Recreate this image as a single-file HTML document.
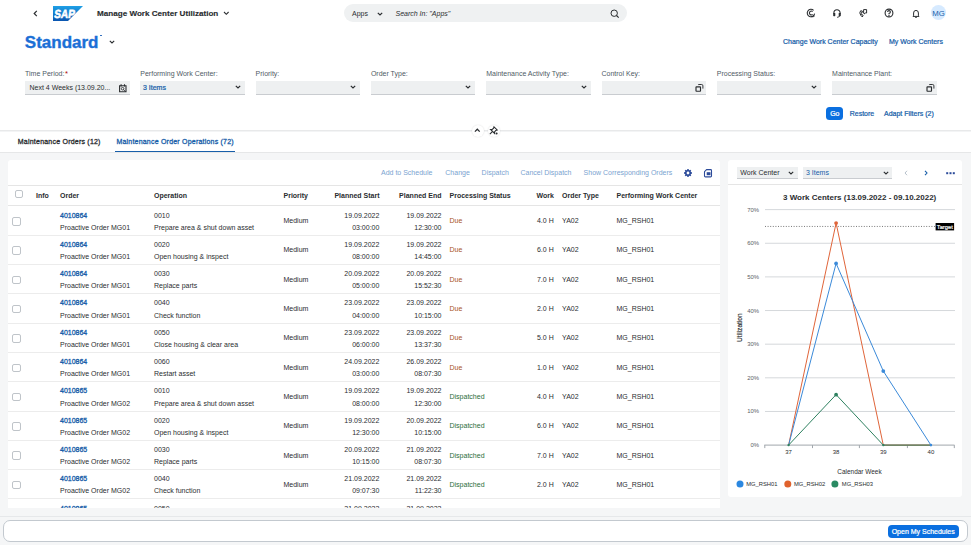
<!DOCTYPE html>
<html><head><meta charset="utf-8">
<style>
*{box-sizing:border-box;margin:0;padding:0}
html,body{width:971px;height:545px;overflow:hidden;background:#fff}
body{font-family:"Liberation Sans",sans-serif;font-size:7px;color:#2a2d30;position:relative}
.a{position:absolute;white-space:nowrap}
.b{font-weight:bold}
.sb{-webkit-text-stroke:0.22px currentColor}
.lk{color:#175ea9}
.lbl{color:#4f5b66;font-size:7px}
.dis{color:#7aa3d0}
.due{color:#a8541f}
.dsp{color:#2b6d3c}
.cb{width:8.5px;height:8.5px;border:1px solid #bfc4c9;border-radius:2px;background:#fff}
.fld{height:13.5px;background:#eef0f1;border-bottom:1px solid #c9ccd0}
svg{position:absolute;overflow:visible}
</style></head><body>

<svg style="left:33px;top:10px" width="5" height="7" viewBox="0 0 5 7"><path d="M3.8 0.8 L1.2 3.5 L3.8 6.2" fill="none" stroke="#2a2d30" stroke-width="1.2"/></svg>
<svg style="left:53px;top:5.7px" width="30" height="15" viewBox="0 0 30 15">
<defs><linearGradient id="sg" x1="0" y1="0" x2="0" y2="1"><stop offset="0" stop-color="#1ea0e6"/><stop offset="1" stop-color="#0a55b0"/></linearGradient></defs>
<path d="M0 0 H30 L15 15 H0 Z" fill="url(#sg)"/>
<text x="1" y="11.8" textLength="20.6" lengthAdjust="spacingAndGlyphs" transform="skewX(-8) translate(1.4 0)" font-family="Liberation Sans" font-weight="bold" font-size="11.8" fill="#fff" stroke="#fff" stroke-width=".55">SAP</text>
</svg>
<div class="a b" style="left:97px;top:9px;font-size:8.1px;color:#2a2d30;-webkit-text-stroke:.15px #2a2d30">Manage Work Center Utilization</div>
<svg style="left:222.5px;top:10.8px" width="7" height="5" viewBox="0 0 7 5"><path d="M1 1 L3.3 3.3 L5.6 1" fill="none" stroke="#2a2d30" stroke-width="1.1"/></svg>
<div class="a" style="left:344px;top:4px;width:283px;height:17.6px;border-radius:9px;background:#eff1f2"></div>
<div class="a" style="left:352px;top:9.5px;color:#2a2d30">Apps</div>
<svg style="left:376.5px;top:11.5px" width="6" height="4" viewBox="0 0 6 4"><path d="M0.8 0.8 L3 3 L5.2 0.8" fill="none" stroke="#2a2d30" stroke-width="1.2"/></svg>
<div class="a" style="left:395.5px;top:9.5px;font-style:italic;color:#2a2d30">Search In: "Apps"</div>
<svg style="left:609.5px;top:8.5px" width="10" height="10" viewBox="0 0 10 10"><circle cx="4.2" cy="4.2" r="3.2" fill="none" stroke="#2a2d30" stroke-width="1"/><path d="M6.5 6.5 L8.7 8.7" stroke="#2a2d30" stroke-width="1.1"/></svg>
<svg style="left:805.5px;top:8px" width="10" height="10" viewBox="0 0 10 10"><path d="M8.6 5.6 A3.7 3.7 0 1 1 7.6 2.4" fill="none" stroke="#2a2d30" stroke-width="1.1"/><path d="M6.6 3.6 A1.9 1.9 0 1 0 6.6 6.4" fill="none" stroke="#2a2d30" stroke-width="1.1"/><path d="M5.5 8.7 Q7.5 9 8.6 8" fill="none" stroke="#2a2d30" stroke-width="1"/></svg>
<svg style="left:832px;top:8px" width="10" height="10" viewBox="0 0 10 10"><path d="M1.9 6 V4.8 A3.1 3.1 0 0 1 8.1 4.8 V6" fill="none" stroke="#2a2d30" stroke-width="1.1"/><rect x="1.2" y="5" width="2.1" height="3.2" rx=".6" fill="#2a2d30"/><rect x="6.7" y="5" width="2.1" height="3.2" rx=".6" fill="#2a2d30"/><path d="M7.6 8 Q7 9.3 5.2 9.3" fill="none" stroke="#2a2d30" stroke-width="1"/></svg>
<svg style="left:858px;top:8px" width="10" height="10" viewBox="0 0 10 10"><path d="M2.6 2.8 Q0.9 4.8 2.8 7.3 L4 8.8 L5.2 8 L4.3 6.5 L3.6 6.7 Q3 5.4 3.6 4.3 L4.3 4.4 L4.3 3 Z" fill="none" stroke="#2a2d30" stroke-width="1"/><path d="M5.6 1.6 H8.6 V5 H7.4 L6.2 6 V5 H5.6 Z" fill="none" stroke="#2a2d30" stroke-width="1"/></svg>
<svg style="left:883.8px;top:8px" width="10" height="10" viewBox="0 0 10 10"><circle cx="5" cy="5" r="3.9" fill="none" stroke="#2a2d30" stroke-width="1.1"/><path d="M3.6 4 Q3.6 2.6 5 2.6 Q6.4 2.6 6.4 3.9 Q6.4 4.9 5 5.4 V6.2" fill="none" stroke="#2a2d30" stroke-width="1.05"/><circle cx="5" cy="7.5" r=".65" fill="#2a2d30"/></svg>
<svg style="left:910.5px;top:9.2px" width="10" height="10" viewBox="0 0 10 10"><path d="M2 7.4 H8 L7.4 6.3 V4 A2.4 2.6 0 0 0 2.6 4 V6.3 Z" fill="none" stroke="#2a2d30" stroke-width="1"/><path d="M4.3 8.5 H5.7" stroke="#2a2d30" stroke-width="1"/></svg>
<div class="a" style="left:931px;top:5.3px;width:15.2px;height:15.2px;border-radius:50%;background:#d6eaff"></div>
<div class="a" style="left:931px;top:8.5px;width:15.2px;text-align:center;color:#175ea9;font-size:7.8px">MG</div>
<div class="a b" style="left:24.8px;top:32.7px;font-size:17px;color:#1b6fd6;-webkit-text-stroke:.35px #1b6fd6">Standard</div>
<div class="a" style="left:100px;top:34.6px;width:1.8px;height:1.8px;border-radius:50%;background:#1b5fb8"></div>
<svg style="left:108.5px;top:39.8px" width="6" height="4" viewBox="0 0 6 4"><path d="M0.8 0.8 L3 3 L5.2 0.8" fill="none" stroke="#2a2d30" stroke-width="1.1"/></svg>
<div class="a sb lk" style="left:783px;top:38.2px">Change Work Center Capacity</div>
<div class="a sb lk" style="left:889px;top:38.2px">My Work Centers</div>
<div class="a lbl" style="left:25px;top:70px">Time Period:</div>
<div class="a fld" style="left:25px;top:81px;width:104.5px"></div>
<svg style="left:118.5px;top:83.7px" width="8" height="9" viewBox="0 0 8 9"><path d="M0.6 1.7 H7 V7.8 H0.6 Z" fill="none" stroke="#2a2d30" stroke-width="1.1"/><path d="M2.1 0.3 V2.4 M5.5 0.3 V2.4" stroke="#2a2d30" stroke-width="1.1"/><circle cx="3.6" cy="4.7" r="1.3" fill="none" stroke="#2a2d30" stroke-width=".85"/><path d="M4.5 5.6 L6.4 7.6" stroke="#2a2d30" stroke-width=".9"/></svg>
<div class="a lbl" style="left:140.3px;top:70px">Performing Work Center:</div>
<div class="a fld" style="left:140.3px;top:81px;width:104.5px"></div>
<svg style="left:234.8px;top:85.3px" width="6" height="4" viewBox="0 0 6 4"><path d="M0.8 0.8 L3 3 L5.2 0.8" fill="none" stroke="#2a2d30" stroke-width="1.2"/></svg>
<div class="a lbl" style="left:255.6px;top:70px">Priority:</div>
<div class="a fld" style="left:255.6px;top:81px;width:104.5px"></div>
<svg style="left:350.1px;top:85.3px" width="6" height="4" viewBox="0 0 6 4"><path d="M0.8 0.8 L3 3 L5.2 0.8" fill="none" stroke="#2a2d30" stroke-width="1.2"/></svg>
<div class="a lbl" style="left:370.9px;top:70px">Order Type:</div>
<div class="a fld" style="left:370.9px;top:81px;width:104.5px"></div>
<svg style="left:465.4px;top:85.3px" width="6" height="4" viewBox="0 0 6 4"><path d="M0.8 0.8 L3 3 L5.2 0.8" fill="none" stroke="#2a2d30" stroke-width="1.2"/></svg>
<div class="a lbl" style="left:486.2px;top:70px">Maintenance Activity Type:</div>
<div class="a fld" style="left:486.2px;top:81px;width:104.5px"></div>
<svg style="left:580.7px;top:85.3px" width="6" height="4" viewBox="0 0 6 4"><path d="M0.8 0.8 L3 3 L5.2 0.8" fill="none" stroke="#2a2d30" stroke-width="1.2"/></svg>
<div class="a lbl" style="left:601.5px;top:70px">Control Key:</div>
<div class="a fld" style="left:601.5px;top:81px;width:104.5px"></div>
<svg style="left:695.2px;top:82.7px" width="9" height="9" viewBox="0 0 9 9"><rect x="1" y="3.9" width="4.5" height="4.3" rx=".4" fill="none" stroke="#2a2d30" stroke-width="1.15"/><path d="M3 2 Q3.2 1.5 4 1.5 H6.6 Q7.9 1.5 7.9 2.8 V5.6" fill="none" stroke="#2a2d30" stroke-width=".95"/></svg>
<div class="a lbl" style="left:716.8px;top:70px">Processing Status:</div>
<div class="a fld" style="left:716.8px;top:81px;width:104.5px"></div>
<svg style="left:811.3px;top:85.3px" width="6" height="4" viewBox="0 0 6 4"><path d="M0.8 0.8 L3 3 L5.2 0.8" fill="none" stroke="#2a2d30" stroke-width="1.2"/></svg>
<div class="a lbl" style="left:832.1px;top:70px">Maintenance Plant:</div>
<div class="a fld" style="left:832.1px;top:81px;width:104.5px"></div>
<svg style="left:925.8px;top:82.7px" width="9" height="9" viewBox="0 0 9 9"><rect x="1" y="3.9" width="4.5" height="4.3" rx=".4" fill="none" stroke="#2a2d30" stroke-width="1.15"/><path d="M3 2 Q3.2 1.5 4 1.5 H6.6 Q7.9 1.5 7.9 2.8 V5.6" fill="none" stroke="#2a2d30" stroke-width=".95"/></svg>
<div class="a" style="left:65px;top:69.3px;color:#aa0808;font-size:7.5px">*</div>
<div class="a" style="left:29.5px;top:84.3px;color:#2a2d30">Next 4 Weeks (13.09.20...</div>
<div class="a sb lk" style="left:143px;top:84.3px">3 Items</div>
<div class="a sb" style="left:826.3px;top:107px;width:17px;height:12.5px;border-radius:3.5px;background:#0a6fe0;color:#fff;text-align:center;line-height:14px">Go</div>
<div class="a sb lk" style="left:849.7px;top:109.7px">Restore</div>
<div class="a sb lk" style="left:884px;top:109.7px">Adapt Filters (2)</div>
<div class="a" style="left:0;top:129.5px;width:971px;height:1px;background:#e8e9ea"></div>
<div class="a" style="left:0;top:130.5px;width:971px;height:1px;background:#f3f4f5"></div>
<div class="a" style="left:471.5px;top:124.8px;width:12px;height:12px;border-radius:50%;background:#fff;box-shadow:0 0 1.5px rgba(0,0,0,.15)"></div>
<svg style="left:474.3px;top:128.2px" width="7" height="5" viewBox="0 0 7 5"><path d="M0.9 3.6 L3.3 1.2 L5.7 3.6" fill="none" stroke="#2a2d30" stroke-width="1.25"/></svg>
<div class="a" style="left:487.5px;top:124.8px;width:12px;height:12px;border-radius:50%;background:#fff;box-shadow:0 0 1.5px rgba(0,0,0,.15)"></div>
<svg style="left:489px;top:125.5px" width="9" height="9" viewBox="0 0 9 9"><path d="M5 0.8 L8.2 4 L6.8 4.4 L5.6 5.8 L5.6 7.4 L1.6 3.4 L3.2 3.4 L4.6 2.2 Z" fill="none" stroke="#2a2d30" stroke-width="1.05"/><path d="M3.4 5.6 L0.8 8.2" stroke="#2a2d30" stroke-width="1.05"/><circle cx="7.6" cy="7.6" r="1" fill="#2a2d30"/></svg>
<div class="a" style="left:17.8px;top:137.6px;color:#2a2d30;letter-spacing:.22px;-webkit-text-stroke:.3px #2a2d30">Maintenance Orders (12)</div>
<div class="a lk" style="left:116.4px;top:137.6px;letter-spacing:.21px;-webkit-text-stroke:.3px currentColor">Maintenance Order Operations (72)</div>
<div class="a" style="left:115px;top:151px;width:120px;height:1.5px;background:#175ea9"></div>
<div class="a" style="left:0;top:153px;width:971px;height:392px;background:#f5f6f7"></div>
<div class="a" style="left:0;top:152.3px;width:971px;height:1.2px;background:#e6e7e8"></div>
<div class="a" style="left:8px;top:160px;width:711.7px;height:348px;background:#fff;border-radius:3px 3px 0 0;overflow:hidden">
<div class="a dis" style="left:373px;top:8.8px;">Add to Schedule</div>
<div class="a dis" style="left:437.3px;top:8.8px;">Change</div>
<div class="a dis" style="left:473.6px;top:8.8px;">Dispatch</div>
<div class="a dis" style="left:512.5px;top:8.8px;">Cancel Dispatch</div>
<div class="a dis" style="left:575.6px;top:8.8px;">Show Corresponding Orders</div>
<svg style="left:676px;top:8.9px" width="8" height="8" viewBox="0 0 8 8"><path d="M7.94 3.32 L7.94 4.68 L6.87 4.89 L6.65 5.40 L7.27 6.31 L6.31 7.27 L5.40 6.65 L4.89 6.87 L4.68 7.94 L3.32 7.94 L3.11 6.87 L2.60 6.65 L1.69 7.27 L0.73 6.31 L1.35 5.40 L1.13 4.89 L0.06 4.68 L0.06 3.32 L1.13 3.11 L1.35 2.60 L0.73 1.69 L1.69 0.73 L2.60 1.35 L3.11 1.13 L3.32 0.06 L4.68 0.06 L4.89 1.13 L5.40 1.35 L6.31 0.73 L7.27 1.69 L6.65 2.60 L6.87 3.11 Z M4 2.6 A1.4 1.4 0 1 0 4 5.4 A1.4 1.4 0 1 0 4 2.6 Z" fill="#2c4b9a" fill-rule="evenodd"/></svg>
<svg style="left:696.3px;top:8.5px" width="8" height="8.5" viewBox="0 0 8 8.5"><path d="M2.6 0.6 H6.6 Q7.5 0.6 7.5 1.5 V7 Q7.5 7.9 6.6 7.9 H1.4 Q0.5 7.9 0.5 7 V2.7 Z" fill="none" stroke="#2c4b9a" stroke-width="1.1"/><rect x="2.7" y="3.2" width="3.8" height="3" fill="#2c4b9a"/></svg>
<div class="a" style="left:0;top:24.5px;width:711.7px;height:1px;background:#e5e5e5"></div>
<div class="a cb" style="left:7.4px;top:30.2px;width:7.8px;height:7.8px"></div>
<div class="a b" style="left:28px;top:31.6px;">Info</div>
<div class="a b" style="left:52px;top:31.6px;">Order</div>
<div class="a b" style="left:146px;top:31.6px;">Operation</div>
<div class="a b" style="left:275.5px;top:31.6px;">Priority</div>
<div class="a b" style="left:441.5px;top:31.6px;">Processing Status</div>
<div class="a b" style="left:554px;top:31.6px;">Order Type</div>
<div class="a b" style="left:608.5px;top:31.6px;">Performing Work Center</div>
<div class="a b" style="right:340.2px;top:31.6px;">Planned Start</div>
<div class="a b" style="right:278.2px;top:31.6px;">Planned End</div>
<div class="a b" style="right:165.8px;top:31.6px;">Work</div>
<div class="a" style="left:0;top:45px;width:711.7px;height:1px;background:#e5e5e5"></div>
<div class="a cb" style="left:4px;top:57.0px"></div>
<div class="a sb lk" style="left:52px;top:51.5px;-webkit-text-stroke:.3px currentColor">4010864</div>
<div class="a " style="left:52px;top:63.7px;">Proactive Order MG01</div>
<div class="a " style="left:146px;top:51.5px;">0010</div>
<div class="a " style="left:146px;top:63.7px;">Prepare area &amp; shut down asset</div>
<div class="a " style="left:275.5px;top:57.1px;">Medium</div>
<div class="a " style="right:340.3px;top:51.5px;">19.09.2022</div>
<div class="a " style="right:340.3px;top:63.7px;">03:00:00</div>
<div class="a " style="right:278.2px;top:51.5px;">19.09.2022</div>
<div class="a " style="right:278.2px;top:63.7px;">12:30:00</div>
<div class="a due" style="left:441.5px;top:57.1px;">Due</div>
<div class="a " style="right:166.0px;top:57.1px;">4.0 H</div>
<div class="a " style="left:554px;top:57.1px;">YA02</div>
<div class="a " style="left:608.5px;top:57.1px;">MG_RSH01</div>
<div class="a" style="left:0;top:74.7px;width:711.7px;height:1px;background:#ececec"></div>
<div class="a cb" style="left:4px;top:86.3px"></div>
<div class="a sb lk" style="left:52px;top:80.8px;-webkit-text-stroke:.3px currentColor">4010864</div>
<div class="a " style="left:52px;top:93.0px;">Proactive Order MG01</div>
<div class="a " style="left:146px;top:80.8px;">0020</div>
<div class="a " style="left:146px;top:93.0px;">Open housing &amp; inspect</div>
<div class="a " style="left:275.5px;top:86.4px;">Medium</div>
<div class="a " style="right:340.3px;top:80.8px;">19.09.2022</div>
<div class="a " style="right:340.3px;top:93.0px;">08:00:00</div>
<div class="a " style="right:278.2px;top:80.8px;">19.09.2022</div>
<div class="a " style="right:278.2px;top:93.0px;">14:45:00</div>
<div class="a due" style="left:441.5px;top:86.4px;">Due</div>
<div class="a " style="right:166.0px;top:86.4px;">6.0 H</div>
<div class="a " style="left:554px;top:86.4px;">YA02</div>
<div class="a " style="left:608.5px;top:86.4px;">MG_RSH01</div>
<div class="a" style="left:0;top:104.0px;width:711.7px;height:1px;background:#ececec"></div>
<div class="a cb" style="left:4px;top:115.6px"></div>
<div class="a sb lk" style="left:52px;top:110.1px;-webkit-text-stroke:.3px currentColor">4010864</div>
<div class="a " style="left:52px;top:122.3px;">Proactive Order MG01</div>
<div class="a " style="left:146px;top:110.1px;">0030</div>
<div class="a " style="left:146px;top:122.3px;">Replace parts</div>
<div class="a " style="left:275.5px;top:115.7px;">Medium</div>
<div class="a " style="right:340.3px;top:110.1px;">20.09.2022</div>
<div class="a " style="right:340.3px;top:122.3px;">05:00:00</div>
<div class="a " style="right:278.2px;top:110.1px;">20.09.2022</div>
<div class="a " style="right:278.2px;top:122.3px;">15:52:30</div>
<div class="a due" style="left:441.5px;top:115.7px;">Due</div>
<div class="a " style="right:166.0px;top:115.7px;">7.0 H</div>
<div class="a " style="left:554px;top:115.7px;">YA02</div>
<div class="a " style="left:608.5px;top:115.7px;">MG_RSH01</div>
<div class="a" style="left:0;top:133.3px;width:711.7px;height:1px;background:#ececec"></div>
<div class="a cb" style="left:4px;top:144.9px"></div>
<div class="a sb lk" style="left:52px;top:139.4px;-webkit-text-stroke:.3px currentColor">4010864</div>
<div class="a " style="left:52px;top:151.6px;">Proactive Order MG01</div>
<div class="a " style="left:146px;top:139.4px;">0040</div>
<div class="a " style="left:146px;top:151.6px;">Check function</div>
<div class="a " style="left:275.5px;top:145.0px;">Medium</div>
<div class="a " style="right:340.3px;top:139.4px;">23.09.2022</div>
<div class="a " style="right:340.3px;top:151.6px;">04:00:00</div>
<div class="a " style="right:278.2px;top:139.4px;">23.09.2022</div>
<div class="a " style="right:278.2px;top:151.6px;">10:15:00</div>
<div class="a due" style="left:441.5px;top:145.0px;">Due</div>
<div class="a " style="right:166.0px;top:145.0px;">2.0 H</div>
<div class="a " style="left:554px;top:145.0px;">YA02</div>
<div class="a " style="left:608.5px;top:145.0px;">MG_RSH01</div>
<div class="a" style="left:0;top:162.6px;width:711.7px;height:1px;background:#ececec"></div>
<div class="a cb" style="left:4px;top:174.2px"></div>
<div class="a sb lk" style="left:52px;top:168.7px;-webkit-text-stroke:.3px currentColor">4010864</div>
<div class="a " style="left:52px;top:180.9px;">Proactive Order MG01</div>
<div class="a " style="left:146px;top:168.7px;">0050</div>
<div class="a " style="left:146px;top:180.9px;">Close housing &amp; clear area</div>
<div class="a " style="left:275.5px;top:174.3px;">Medium</div>
<div class="a " style="right:340.3px;top:168.7px;">23.09.2022</div>
<div class="a " style="right:340.3px;top:180.9px;">06:00:00</div>
<div class="a " style="right:278.2px;top:168.7px;">23.09.2022</div>
<div class="a " style="right:278.2px;top:180.9px;">13:37:30</div>
<div class="a due" style="left:441.5px;top:174.3px;">Due</div>
<div class="a " style="right:166.0px;top:174.3px;">5.0 H</div>
<div class="a " style="left:554px;top:174.3px;">YA02</div>
<div class="a " style="left:608.5px;top:174.3px;">MG_RSH01</div>
<div class="a" style="left:0;top:191.9px;width:711.7px;height:1px;background:#ececec"></div>
<div class="a cb" style="left:4px;top:203.5px"></div>
<div class="a sb lk" style="left:52px;top:198.0px;-webkit-text-stroke:.3px currentColor">4010864</div>
<div class="a " style="left:52px;top:210.2px;">Proactive Order MG01</div>
<div class="a " style="left:146px;top:198.0px;">0060</div>
<div class="a " style="left:146px;top:210.2px;">Restart asset</div>
<div class="a " style="left:275.5px;top:203.6px;">Medium</div>
<div class="a " style="right:340.3px;top:198.0px;">24.09.2022</div>
<div class="a " style="right:340.3px;top:210.2px;">03:00:00</div>
<div class="a " style="right:278.2px;top:198.0px;">26.09.2022</div>
<div class="a " style="right:278.2px;top:210.2px;">08:07:30</div>
<div class="a due" style="left:441.5px;top:203.6px;">Due</div>
<div class="a " style="right:166.0px;top:203.6px;">1.0 H</div>
<div class="a " style="left:554px;top:203.6px;">YA02</div>
<div class="a " style="left:608.5px;top:203.6px;">MG_RSH01</div>
<div class="a" style="left:0;top:221.2px;width:711.7px;height:1px;background:#ececec"></div>
<div class="a cb" style="left:4px;top:232.8px"></div>
<div class="a sb lk" style="left:52px;top:227.3px;-webkit-text-stroke:.3px currentColor">4010865</div>
<div class="a " style="left:52px;top:239.5px;">Proactive Order MG02</div>
<div class="a " style="left:146px;top:227.3px;">0010</div>
<div class="a " style="left:146px;top:239.5px;">Prepare area &amp; shut down asset</div>
<div class="a " style="left:275.5px;top:232.9px;">Medium</div>
<div class="a " style="right:340.3px;top:227.3px;">19.09.2022</div>
<div class="a " style="right:340.3px;top:239.5px;">08:00:00</div>
<div class="a " style="right:278.2px;top:227.3px;">19.09.2022</div>
<div class="a " style="right:278.2px;top:239.5px;">12:30:00</div>
<div class="a dsp" style="left:441.5px;top:232.9px;">Dispatched</div>
<div class="a " style="right:166.0px;top:232.9px;">4.0 H</div>
<div class="a " style="left:554px;top:232.9px;">YA02</div>
<div class="a " style="left:608.5px;top:232.9px;">MG_RSH01</div>
<div class="a" style="left:0;top:250.5px;width:711.7px;height:1px;background:#ececec"></div>
<div class="a cb" style="left:4px;top:262.1px"></div>
<div class="a sb lk" style="left:52px;top:256.6px;-webkit-text-stroke:.3px currentColor">4010865</div>
<div class="a " style="left:52px;top:268.8px;">Proactive Order MG02</div>
<div class="a " style="left:146px;top:256.6px;">0020</div>
<div class="a " style="left:146px;top:268.8px;">Open housing &amp; inspect</div>
<div class="a " style="left:275.5px;top:262.2px;">Medium</div>
<div class="a " style="right:340.3px;top:256.6px;">19.09.2022</div>
<div class="a " style="right:340.3px;top:268.8px;">12:30:00</div>
<div class="a " style="right:278.2px;top:256.6px;">20.09.2022</div>
<div class="a " style="right:278.2px;top:268.8px;">10:15:00</div>
<div class="a dsp" style="left:441.5px;top:262.2px;">Dispatched</div>
<div class="a " style="right:166.0px;top:262.2px;">6.0 H</div>
<div class="a " style="left:554px;top:262.2px;">YA02</div>
<div class="a " style="left:608.5px;top:262.2px;">MG_RSH01</div>
<div class="a" style="left:0;top:279.8px;width:711.7px;height:1px;background:#ececec"></div>
<div class="a cb" style="left:4px;top:291.4px"></div>
<div class="a sb lk" style="left:52px;top:285.9px;-webkit-text-stroke:.3px currentColor">4010865</div>
<div class="a " style="left:52px;top:298.1px;">Proactive Order MG02</div>
<div class="a " style="left:146px;top:285.9px;">0030</div>
<div class="a " style="left:146px;top:298.1px;">Replace parts</div>
<div class="a " style="left:275.5px;top:291.5px;">Medium</div>
<div class="a " style="right:340.3px;top:285.9px;">20.09.2022</div>
<div class="a " style="right:340.3px;top:298.1px;">10:15:00</div>
<div class="a " style="right:278.2px;top:285.9px;">21.09.2022</div>
<div class="a " style="right:278.2px;top:298.1px;">08:07:30</div>
<div class="a dsp" style="left:441.5px;top:291.5px;">Dispatched</div>
<div class="a " style="right:166.0px;top:291.5px;">7.0 H</div>
<div class="a " style="left:554px;top:291.5px;">YA02</div>
<div class="a " style="left:608.5px;top:291.5px;">MG_RSH01</div>
<div class="a" style="left:0;top:309.1px;width:711.7px;height:1px;background:#ececec"></div>
<div class="a cb" style="left:4px;top:320.7px"></div>
<div class="a sb lk" style="left:52px;top:315.2px;-webkit-text-stroke:.3px currentColor">4010865</div>
<div class="a " style="left:52px;top:327.4px;">Proactive Order MG02</div>
<div class="a " style="left:146px;top:315.2px;">0040</div>
<div class="a " style="left:146px;top:327.4px;">Check function</div>
<div class="a " style="left:275.5px;top:320.8px;">Medium</div>
<div class="a " style="right:340.3px;top:315.2px;">21.09.2022</div>
<div class="a " style="right:340.3px;top:327.4px;">09:07:30</div>
<div class="a " style="right:278.2px;top:315.2px;">21.09.2022</div>
<div class="a " style="right:278.2px;top:327.4px;">11:22:30</div>
<div class="a dsp" style="left:441.5px;top:320.8px;">Dispatched</div>
<div class="a " style="right:166.0px;top:320.8px;">2.0 H</div>
<div class="a " style="left:554px;top:320.8px;">YA02</div>
<div class="a " style="left:608.5px;top:320.8px;">MG_RSH01</div>
<div class="a" style="left:0;top:338.4px;width:711.7px;height:1px;background:#ececec"></div>
<div class="a cb" style="left:4px;top:350.0px"></div>
<div class="a sb lk" style="left:52px;top:344.5px;-webkit-text-stroke:.3px currentColor">4010865</div>
<div class="a " style="left:52px;top:356.7px;">Proactive Order MG02</div>
<div class="a " style="left:146px;top:344.5px;">0050</div>
<div class="a " style="left:146px;top:356.7px;">Close housing &amp; clear area</div>
<div class="a " style="left:275.5px;top:350.1px;">Medium</div>
<div class="a " style="right:340.3px;top:344.5px;">21.09.2022</div>
<div class="a " style="right:340.3px;top:356.7px;">11:22:30</div>
<div class="a " style="right:278.2px;top:344.5px;">21.09.2022</div>
<div class="a " style="right:278.2px;top:356.7px;">12:30:00</div>
<div class="a dsp" style="left:441.5px;top:350.1px;">Dispatched</div>
<div class="a " style="right:166.0px;top:350.1px;">5.0 H</div>
<div class="a " style="left:554px;top:350.1px;">YA02</div>
<div class="a " style="left:608.5px;top:350.1px;">MG_RSH01</div>
<div class="a" style="left:0;top:367.7px;width:711.7px;height:1px;background:#ececec"></div>
</div>
<div class="a" style="left:728px;top:160px;width:234px;height:336.8px;background:#fff;border-radius:3px"></div>
<div class="a fld" style="left:737.4px;top:167.2px;width:60.3px;height:11.6px"></div>
<div class="a" style="left:740.3px;top:169px;color:#2a2d30">Work Center</div>
<svg style="left:788px;top:170.8px" width="6" height="4" viewBox="0 0 6 4"><path d="M0.8 0.8 L3 3 L5.2 0.8" fill="none" stroke="#2a2d30" stroke-width="1.1"/></svg>
<div class="a fld" style="left:803.4px;top:167.2px;width:89px;height:11.6px"></div>
<div class="a lk" style="left:806px;top:169px">3 Items</div>
<svg style="left:882.5px;top:170.8px" width="6" height="4" viewBox="0 0 6 4"><path d="M0.8 0.8 L3 3 L5.2 0.8" fill="none" stroke="#2a2d30" stroke-width="1.1"/></svg>
<svg style="left:903.5px;top:169.5px" width="4" height="6" viewBox="0 0 4 6"><path d="M3 0.8 L1 3 L3 5.2" fill="none" stroke="#b8c2cc" stroke-width="1"/></svg>
<svg style="left:923.5px;top:169.5px" width="4" height="6" viewBox="0 0 4 6"><path d="M1 0.8 L3 3 L1 5.2" fill="none" stroke="#175ea9" stroke-width="1.1"/></svg>
<svg style="left:946px;top:171.5px" width="9" height="3" viewBox="0 0 9 3"><rect x="0.2" y="0.2" width="2" height="2" fill="#2c4b9a"/><rect x="3.5" y="0.2" width="2" height="2" fill="#2c4b9a"/><rect x="6.8" y="0.2" width="2" height="2" fill="#2c4b9a"/></svg>
<div class="a" style="left:728px;top:184px;width:234px;height:1px;background:#e5e5e5"></div>
<div class="a b" style="left:783px;top:193px;font-size:8px;color:#2a2d30">3 Work Centers (13.09.2022 - 09.10.2022)</div>
<svg style="left:0;top:0" width="971" height="545" viewBox="0 0 971 545">
<line x1="765" x2="955" y1="411.46" y2="411.46" stroke="#d5d8db" stroke-width="1"/>
<line x1="765" x2="955" y1="377.82" y2="377.82" stroke="#d5d8db" stroke-width="1"/>
<line x1="765" x2="955" y1="344.18" y2="344.18" stroke="#d5d8db" stroke-width="1"/>
<line x1="765" x2="955" y1="310.54" y2="310.54" stroke="#d5d8db" stroke-width="1"/>
<line x1="765" x2="955" y1="276.9" y2="276.9" stroke="#d5d8db" stroke-width="1"/>
<line x1="765" x2="955" y1="243.26" y2="243.26" stroke="#d5d8db" stroke-width="1"/>
<line x1="765" x2="955" y1="209.62" y2="209.62" stroke="#d5d8db" stroke-width="1"/>
<text x="759" y="447.1" text-anchor="end" font-family="Liberation Sans" font-size="5.9" fill="#5b6066">0%</text>
<text x="759" y="413.46" text-anchor="end" font-family="Liberation Sans" font-size="5.9" fill="#5b6066">10%</text>
<text x="759" y="379.82" text-anchor="end" font-family="Liberation Sans" font-size="5.9" fill="#5b6066">20%</text>
<text x="759" y="346.18" text-anchor="end" font-family="Liberation Sans" font-size="5.9" fill="#5b6066">30%</text>
<text x="759" y="312.54" text-anchor="end" font-family="Liberation Sans" font-size="5.9" fill="#5b6066">40%</text>
<text x="759" y="278.9" text-anchor="end" font-family="Liberation Sans" font-size="5.9" fill="#5b6066">50%</text>
<text x="759" y="245.26" text-anchor="end" font-family="Liberation Sans" font-size="5.9" fill="#5b6066">60%</text>
<text x="759" y="211.62" text-anchor="end" font-family="Liberation Sans" font-size="5.9" fill="#5b6066">70%</text>
<line x1="765" x2="936" y1="226.44" y2="226.44" stroke="#555" stroke-width=".8" stroke-dasharray="1 1.6"/>
<rect x="935.6" y="223" width="18.5" height="7.4" fill="#000"/>
<text x="944.8" y="229.2" text-anchor="middle" font-family="Liberation Sans" font-size="6.2" fill="#fff" stroke="#fff" stroke-width=".2" textLength="16" lengthAdjust="spacingAndGlyphs">Target</text>
<line x1="764.3" x2="954.5" y1="445.1" y2="445.1" stroke="#a0a6ac" stroke-width="1"/>
<line x1="764.8" x2="764.8" y1="445.1" y2="448.1" stroke="#a0a6ac" stroke-width="1"/>
<line x1="812.5" x2="812.5" y1="445.1" y2="448.1" stroke="#a0a6ac" stroke-width="1"/>
<line x1="859.4" x2="859.4" y1="445.1" y2="448.1" stroke="#a0a6ac" stroke-width="1"/>
<line x1="907.4" x2="907.4" y1="445.1" y2="448.1" stroke="#a0a6ac" stroke-width="1"/>
<line x1="954.3" x2="954.3" y1="445.1" y2="448.1" stroke="#a0a6ac" stroke-width="1"/>
<text x="788.6" y="454.4" text-anchor="middle" font-family="Liberation Sans" font-size="6" fill="#2a2d30">37</text>
<text x="836.1" y="454.4" text-anchor="middle" font-family="Liberation Sans" font-size="6" fill="#2a2d30">38</text>
<text x="883.3" y="454.4" text-anchor="middle" font-family="Liberation Sans" font-size="6" fill="#2a2d30">39</text>
<text x="930.9" y="454.4" text-anchor="middle" font-family="Liberation Sans" font-size="6" fill="#2a2d30">40</text>
<text x="859.5" y="473.6" text-anchor="middle" font-family="Liberation Sans" font-size="6.45" fill="#2a2d30">Calendar Week</text>
<text transform="translate(742.2 327.6) rotate(-90)" text-anchor="middle" font-family="Liberation Sans" font-size="6.6" fill="#2a2d30" stroke="#2a2d30" stroke-width=".15">Utilization</text>
<polyline points="788.6,445.1 836.1,223.08 883.3,445.1 930.9,445.1" fill="none" stroke="#e0653a" stroke-width="1" stroke-linejoin="round"/>
<polyline points="788.6,445.1 836.1,263.44 883.3,371.09 930.9,445.1" fill="none" stroke="#3b8ad9" stroke-width="1" stroke-linejoin="round"/>
<polyline points="788.6,445.1 836.1,394.64 883.3,445.1 930.9,445.1" fill="none" stroke="#2e8160" stroke-width="1" stroke-linejoin="round"/>
<circle cx="836.1" cy="223.08" r="1.9" fill="#e0653a"/>
<circle cx="836.1" cy="263.44" r="1.9" fill="#3b8ad9"/>
<circle cx="883.3" cy="371.09" r="1.9" fill="#3b8ad9"/>
<circle cx="930.9" cy="445.1" r="1.3" fill="#3b8ad9"/>
<circle cx="836.1" cy="394.64" r="1.9" fill="#2e8160"/>
<circle cx="788.6" cy="445.1" r="1.2" fill="#2e8160"/>
<circle cx="883.3" cy="445.1" r="1.2" fill="#2e8160"/>
<circle cx="740" cy="483.9" r="3.5" fill="#2b87e0"/>
<text x="746.2" y="486" font-family="Liberation Sans" font-size="5.8" fill="#2a2d30">MG_RSH01</text>
<circle cx="787.8" cy="483.9" r="3.5" fill="#e0622c"/>
<text x="794" y="486" font-family="Liberation Sans" font-size="5.8" fill="#2a2d30">MG_RSH02</text>
<circle cx="834.9" cy="483.9" r="3.5" fill="#2a8a63"/>
<text x="841.8" y="486" font-family="Liberation Sans" font-size="5.8" fill="#2a2d30">MG_RSH03</text>
</svg>
<div class="a" style="left:0;top:515.8px;width:971px;height:1px;background:#e6e8ea"></div>
<div class="a" style="left:3.2px;top:520px;width:964.6px;height:21.5px;border:1px solid #c3c9cf;border-radius:7px;background:#fff"></div>
<div class="a sb" style="left:887.7px;top:524.9px;width:71px;height:12.9px;border-radius:4px;background:#0a6fe0;color:#fff;text-align:center;line-height:13.6px">Open My Schedules</div>
</body></html>
